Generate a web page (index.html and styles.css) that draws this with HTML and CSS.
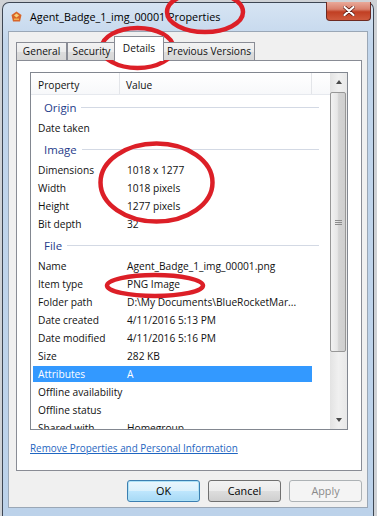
FILE: index.html
```html
<!DOCTYPE html>
<html lang="en">
<head>
    <meta charset="UTF-8">
    <title>Agent_Badge_1_img_00001 Properties</title>
    <meta name="viewport" content="width=device-width, initial-scale=1.0">
    <link rel="stylesheet" href="styles.css">
</head>
<body>
    <div class="window">
        <div class="titlebar">
            <svg class="app-icon" width="11" height="11" viewBox="0 0 11 11">
                <path d="M5.5 0.5 L10.5 4 L9 10.5 L2 10.5 L0.5 4 Z" fill="#d8662a"/>
                <path d="M5.5 2.5 L8 4.5 L5.5 6.5 L3 4.5 Z" fill="#f7d27a"/>
                <rect x="3" y="7.5" width="5" height="1.5" fill="#f3b04a"/>
            </svg>
            <span class="title">Agent_Badge_1_img_00001 Properties</span>
            <div class="close">
                <svg width="12" height="10" viewBox="0 0 12 10">
                    <path d="M1.5 1 L10.5 9 M10.5 1 L1.5 9" stroke="#5a1a12" stroke-width="3.6" stroke-linecap="round"/>
                    <path d="M1.5 1 L10.5 9 M10.5 1 L1.5 9" stroke="#ffffff" stroke-width="2.2" stroke-linecap="round"/>
                </svg>
            </div>
        </div>

        <div class="dialog">
            <div class="tabs">
                <div class="tab t-general">General</div>
                <div class="tab t-security">Security</div>
                <div class="tab t-details active">Details</div>
                <div class="tab t-previous">Previous Versions</div>
            </div>

            <div class="panel">
                <div class="list">
                    <div class="list-main">
                        <div class="list-head">
                            <div class="hcol h-prop">Property</div>
                            <div class="hcol h-val">Value</div>
                            <div class="hcol h-rest"></div>
                        </div>

                        <div class="group">Origin</div>
                        <div class="row"><span class="k">Date taken</span><span class="v"></span></div>

                        <div class="group">Image</div>
                        <div class="row"><span class="k">Dimensions</span><span class="v">1018 x 1277</span></div>
                        <div class="row"><span class="k">Width</span><span class="v">1018 pixels</span></div>
                        <div class="row"><span class="k">Height</span><span class="v">1277 pixels</span></div>
                        <div class="row"><span class="k">Bit depth</span><span class="v">32</span></div>

                        <div class="group">File</div>
                        <div class="row"><span class="k">Name</span><span class="v">Agent_Badge_1_img_00001.png</span></div>
                        <div class="row"><span class="k">Item type</span><span class="v">PNG Image</span></div>
                        <div class="row"><span class="k">Folder path</span><span class="v">D:\My Documents\BlueRocketMar...</span></div>
                        <div class="row"><span class="k">Date created</span><span class="v">4/11/2016 5:13 PM</span></div>
                        <div class="row"><span class="k">Date modified</span><span class="v">4/11/2016 5:16 PM</span></div>
                        <div class="row"><span class="k">Size</span><span class="v">282 KB</span></div>
                        <div class="row selected"><span class="k">Attributes</span><span class="v">A</span></div>
                        <div class="row"><span class="k">Offline availability</span><span class="v"></span></div>
                        <div class="row"><span class="k">Offline status</span><span class="v"></span></div>
                        <div class="row"><span class="k">Shared with</span><span class="v">Homegroup</span></div>
                    </div>

                    <div class="scrollbar">
                        <div class="sb-btn"><span class="arrow-up"></span></div>
                        <div class="sb-thumb"><span class="grip"></span></div>
                        <div class="sb-track"></div>
                        <div class="sb-btn"><span class="arrow-down"></span></div>
                    </div>
                </div>

                <a class="remove-link" href="#">Remove Properties and Personal Information</a>
            </div>

            <div class="buttons">
                <button class="btn default">OK</button>
                <button class="btn">Cancel</button>
                <button class="btn" disabled>Apply</button>
            </div>
        </div>
    </div>

    <svg class="marks" width="377" height="516" viewBox="0 0 377 516">
        <ellipse cx="205" cy="12" rx="38" ry="20"/>
        <ellipse cx="137.5" cy="48" rx="36" ry="20"/>
        <ellipse cx="156.5" cy="182.5" rx="56" ry="39"/>
        <ellipse cx="155" cy="285.5" rx="48" ry="10.5"/>
    </svg>
</body>
</html>
```

FILE: styles.css
```css
body {
    margin: 0;
    width: 377px;
    height: 516px;
    overflow: hidden;
    position: relative;
    background: #cfd2d6;
    font-family: "Open Sans", "Noto Sans", sans-serif;
    font-size: 10.2px;
    color: #111;
}

.window {
    margin: 2px 3px 0 2px;
    height: 514px;
    box-sizing: border-box;
    border: 1px solid #3e4754;
    border-bottom: 0;
    border-radius: 7px 7px 0 0;
    background: linear-gradient(#d6e4f3, #c2d6ec 40px, #bcd2ea);
    padding: 0 5px 6px 5px;
}

.titlebar {
    height: 28px;
    display: flex;
    align-items: center;
}
.app-icon {
    margin-left: 3px;
    margin-top: -1px;
}
.title {
    margin-left: 8px;
    margin-top: -2px;
    font-size: 10.8px;
    color: #000;
}
.close {
    margin-left: auto;
    margin-right: -3px;
    align-self: flex-start;
    margin-top: -1px;
    width: 45px;
    height: 19px;
    box-sizing: border-box;
    border: 1px solid #6d2a22;
    border-top: 0;
    border-radius: 0 0 4px 4px;
    background: linear-gradient(#e9a999 0%, #d9806c 40%, #c13f23 55%, #cf5a3d 100%);
    display: flex;
    align-items: center;
    justify-content: center;
}

.dialog {
    height: 477px;
    box-sizing: border-box;
    border: 1px solid #9aa7b6;
    background: #f0f0f0;
    padding: 4px 5px 0 7px;
}

/* tabs */
.tabs {
    display: flex;
    align-items: flex-end;
    height: 25px;
    margin-bottom: -1px;
    position: relative;
    z-index: 1;
}
.tab {
    height: 18px;
    box-sizing: border-box;
    border: 1px solid #898c95;
    border-bottom: 0;
    margin-bottom: 1px;
    background: linear-gradient(#f3f3f3, #ebebeb 50%, #dddddd 51%, #d7d7d7);
    display: flex;
    align-items: center;
    justify-content: center;
    padding-bottom: 1px;
}
.t-general { width: 51px; }
.t-security { width: 49px; margin-left: 0; }
.t-details { width: 50px; margin-left: -2px; }
.t-previous { width: 92px; margin-left: -1px; }
.tab.active {
    height: 25px;
    margin-bottom: 0;
    background: #fff;
    position: relative;
    z-index: 2;
    padding-bottom: 3px;
}

.panel {
    height: 411px;
    box-sizing: border-box;
    border: 1px solid #898c95;
    background: #fff;
    padding: 11px 13px 0 13px;
}

/* details list */
.list {
    height: 358px;
    box-sizing: border-box;
    border: 1px solid #828790;
    display: flex;
    background: #fff;
}
.list-main {
    flex: 1;
    overflow: hidden;
}
.list-head {
    display: flex;
    height: 22px;
    box-sizing: border-box;
    border-bottom: 1px solid #e6e9ee;
    background: linear-gradient(#ffffff, #f7f8fa);
}
.hcol {
    display: flex;
    align-items: center;
    padding-top: 2px;
    border-right: 1px solid #e3e5e9;
    box-sizing: border-box;
}
.h-prop { width: 89px; padding-left: 7px; }
.h-val { width: 192px; padding-left: 6px; }
.h-rest { flex: 1; border-right: 0; }

.group {
    height: 24px;
    display: flex;
    align-items: center;
    padding-left: 13px;
    margin-right: 11px;
    font-size: 11.4px;
    color: #1e3b8a;
}
.group::after {
    content: "";
    flex: 1;
    height: 1px;
    margin-left: 5px;
    background: #d3d9e4;
}

.row {
    display: flex;
    align-items: center;
    height: 18px;
    box-sizing: border-box;
    padding: 1px 0;
    margin: 0 18px 0 2px;
    white-space: nowrap;
    background-clip: content-box;
}
.row .k {
    width: 87px;
    padding-left: 5px;
    box-sizing: border-box;
}
.row .v {
    padding-left: 7px;
}
.row.selected {
    background-color: #3399ff;
    color: #fff;
}

/* scrollbar */
.scrollbar {
    width: 17px;
    display: flex;
    flex-direction: column;
    background: linear-gradient(90deg, #e3e3e3, #f0f0f0 50%, #e8e8e8);
}
.sb-btn {
    height: 19px;
    display: flex;
    align-items: center;
    justify-content: center;
}
.arrow-up, .arrow-down {
    width: 0;
    height: 0;
    border-left: 3.5px solid transparent;
    border-right: 3.5px solid transparent;
}
.arrow-up { border-bottom: 4px solid #4a4a4a; margin-top: -1px; }
.arrow-down { border-top: 4px solid #4a4a4a; }
.sb-thumb {
    height: 260px;
    margin: 0 1px 0 0;
    box-sizing: border-box;
    border: 1px solid #979797;
    border-radius: 2px;
    background: linear-gradient(90deg, #f2f2f2, #e6e6e6 45%, #d4d4d4 55%, #cfcfcf);
    display: flex;
    align-items: center;
    justify-content: center;
}
.grip {
    width: 7px;
    height: 5px;
    background: repeating-linear-gradient(#8c8c8c 0 1px, transparent 1px 2px);
}
.sb-track { flex: 1; }

.remove-link {
    display: inline-block;
    margin-top: 11px;
    font-size: 9.9px;
    color: #1f66c1;
    text-decoration: underline;
}

/* buttons */
.buttons {
    display: flex;
    justify-content: flex-end;
    gap: 8px;
    margin-top: 9px;
}
.btn {
    width: 73px;
    height: 22px;
    box-sizing: border-box;
    border: 1px solid #707070;
    border-radius: 3px;
    background: linear-gradient(#f2f2f2, #ebebeb 50%, #dddddd 51%, #cfcfcf);
    font-family: "Open Sans", "Noto Sans", sans-serif;
    font-size: 10.8px;
    color: #000;
    padding: 0 0 1px 0;
}
.btn.default {
    border-color: #3c7fb1;
    box-shadow: inset 0 0 0 1px #aee2f7;
    background: linear-gradient(#eaf6fd, #d9f0fc 50%, #bee6fd 51%, #a7d9f5);
}
.btn:disabled {
    border-color: #adb2b5;
    background: #f4f4f4;
    color: #8a8a8a;
}

/* red annotation circles drawn over the screenshot */
.marks {
    position: absolute;
    left: 0;
    top: 0;
    pointer-events: none;
}
.marks ellipse {
    fill: none;
    stroke: #dc1f27;
    stroke-width: 4.5;
}
```
